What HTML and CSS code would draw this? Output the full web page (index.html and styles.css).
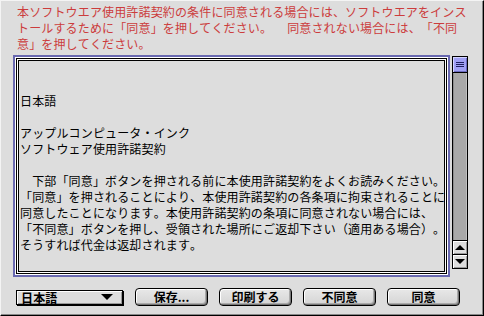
FILE: index.html
```html
<!DOCTYPE html>
<html lang="ja">
<head>
    <title>使用許諾契約</title>
    <link rel="stylesheet" href="styles.css">
</head>
<body>
    <div class="window">
        <p class="notice">本ソフトウエア使用許諾契約の条件に同意される場合には、ソフトウエアをインス<br>トールするために「同意」を押してください。　 同意されない場合には、「不同<br>意」を押してください。</p>

        <div class="main">
            <div class="list">
                <div class="list-frame">
                    <div class="list-text">
                        <br>
                        <br>
                        日本語<br>
                        <br>
                        アップルコンピュータ・インク<br>
                        ソフトウェア使用許諾契約<br>
                        <br>
                        　下部「同意」ボタンを押される前に本使用許諾契約をよくお読みください。<br>
                        「同意」を押されることにより、本使用許諾契約の各条項に拘束されることに<br>
                        同意したことになります。本使用許諾契約の条項に同意されない場合には、<br>
                        「不同意」ボタンを押し、受領された場所にご返却下さい（適用ある場合）。<br>
                        そうすれば代金は返却されます。
                    </div>
                </div>
            </div>

            <!-- スクロールバー -->
            <div class="scrollbar">
                <div class="thumb"><span></span><span></span><span></span></div>
                <div class="track"></div>
                <div class="arrow"><i class="tri-up"></i></div>
                <div class="arrow"><i class="tri-down"></i></div>
            </div>
        </div>

        <div class="buttons">
            <div class="popup">
                <span>日本語</span>
                <i class="tri-down"></i>
            </div>
            <button>保存...</button>
            <button>印刷する</button>
            <button>不同意</button>
            <button>同意</button>
        </div>
    </div>
</body>
</html>
```

FILE: styles.css
```css
:root {
    --window-gray: #dddddd;
    --track-gray: #a9a9a9;
    --focus-purple: #6868b0;
    --thumb-purple: #a0a0f4;
    --notice-red: #cc3c3c;
}

* {
    margin: 0;
    padding: 0;
    box-sizing: border-box;
}

body {
    width: 484px;
    height: 316px;
    overflow: hidden;
    font-family: "Noto Sans CJK JP", "Noto Sans", sans-serif;
    font-size: 12px;
    letter-spacing: 0.15px;
    color: #000;
    background: var(--window-gray);
    text-spacing-trim: space-all;
    font-kerning: none;
}

.window {
    width: 484px;
    height: 316px;
    background: var(--window-gray);
    border: 1px solid;
    border-color: #f4f4f4 #000 #000 #f4f4f4;
    box-shadow: inset -1px -1px 0 #888;
}

.notice {
    margin: 3px 0 0 16px;
    color: var(--notice-red);
    line-height: 16px;
    white-space: nowrap;
}

.main {
    display: flex;
    align-items: flex-start;
    margin: 3px 0 0 12px;
}

/* テキスト欄 */
.list {
    width: 437px;
    height: 222px;
    border: 2px solid var(--focus-purple);
    background: #fff;
    padding: 1px;
}

.list-frame {
    height: 100%;
    border: 1px solid #000;
    background: #fff;
    padding: 1px;
}

.list-text {
    height: 100%;
    border: 1px solid #000;
    background: var(--window-gray);
    padding: 0 0 0 1px;
    line-height: 16px;
    white-space: nowrap;
    overflow: hidden;
}

.scrollbar {
    width: 16px;
    height: 213px;
    margin: 1px 0 0 2px;
    border: 1px solid #000;
    display: flex;
    flex-direction: column;
}

.thumb {
    height: 16px;
    background: var(--thumb-purple);
    border-bottom: 1px solid #000;
    box-shadow: inset 1px 1px 0 #d4d4ff, inset -1px -1px 0 #6c6cc0;
    display: flex;
    flex-direction: column;
    align-items: center;
    justify-content: center;
    gap: 1px;
}

.thumb span {
    width: 8px;
    height: 1px;
    background: #202060;
}

.track {
    flex: 1;
    background: var(--track-gray);
    box-shadow: inset 1px 0 0 #8c8c8c, inset -1px 0 0 #c0c0c0;
}

.arrow {
    height: 14px;
    border-top: 1px solid #000;
    background: var(--window-gray);
    box-shadow: inset 1px 1px 0 #fff, inset -1px -1px 0 #999;
    display: flex;
    align-items: center;
    justify-content: center;
}

.tri-up,
.tri-down {
    width: 0;
    height: 0;
    border-left: 5px solid transparent;
    border-right: 5px solid transparent;
}

.tri-up {
    border-bottom: 5px solid #000;
}

.tri-down {
    border-top: 5px solid #000;
}

/* ボタン */
.buttons {
    display: flex;
    align-items: center;
    gap: 11px;
    margin: 11px 0 0 15px;
}

.popup {
    width: 107px;
    height: 15px;
    border: 1px solid #000;
    box-shadow: 1px 1px 0 #000, inset 1px 1px 0 #fff, inset -1px -1px 0 #999;
    background: var(--window-gray);
    display: flex;
    align-items: center;
    justify-content: space-between;
    padding: 0 9px 0 4px;
    font-weight: bold;
    line-height: 13px;
    margin-right: 1px;
}

.popup .tri-down {
    border-left-width: 6px;
    border-right-width: 6px;
    border-top-width: 6px;
}

button {
    width: 73px;
    height: 18px;
    font-family: inherit;
    font-size: 12px;
    font-weight: bold;
    letter-spacing: 0;
    line-height: 14px;
    color: #000;
    background: linear-gradient(#e8e8e8, #d4d4d4);
    border: 1px solid #000;
    border-radius: 4px;
    box-shadow: inset 1px 1px 0 #fff, inset -1px -1px 0 #777, inset -2px -2px 0 #aaa;
}
```
